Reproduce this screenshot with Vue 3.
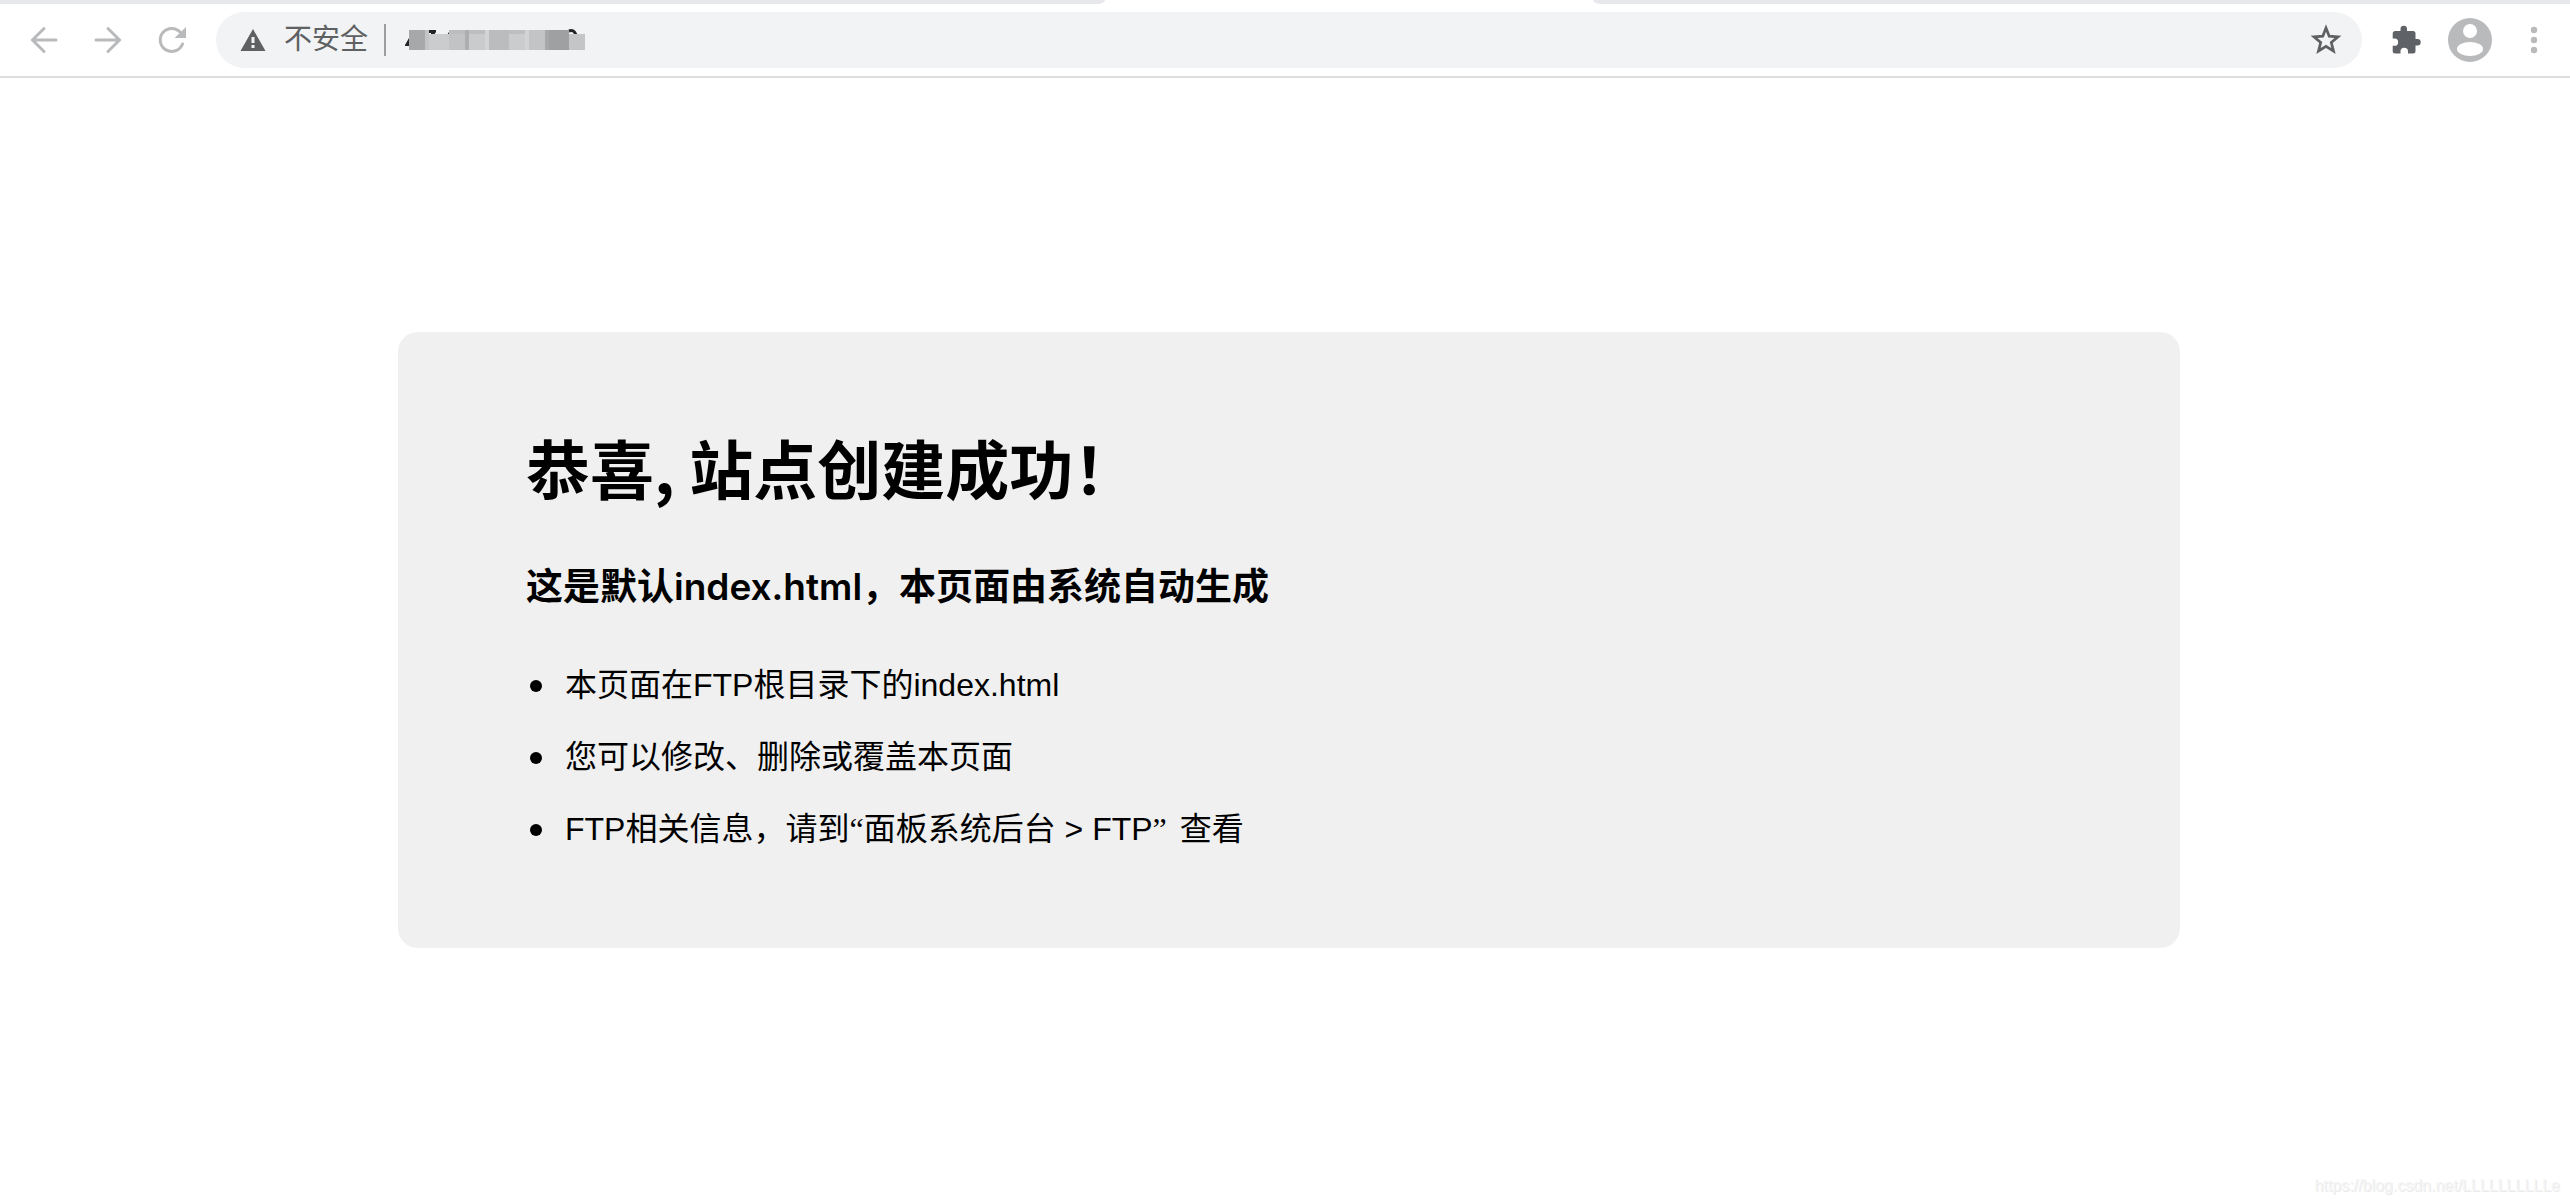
<script setup>
const blocks = [
  [4, 4, 16, 20, '#a7a8a9'], [20, 4, 4, 20, '#c3c4c5'], [24, 8, 20, 16, '#cbcccd'],
  [44, 4, 16, 20, '#bcbdbe'], [44, 8, 16, 16, '#c2c3c4'], [60, 4, 4, 20, '#adaeaf'],
  [64, 4, 16, 20, '#bdbebf'], [64, 8, 16, 16, '#cacbcc'], [80, 4, 4, 20, '#d3d4d5'],
  [84, 4, 20, 20, '#bbbcbd'], [104, 4, 16, 20, '#bebfc0'], [104, 8, 16, 16, '#cbcccd'],
  [120, 4, 4, 20, '#d2d3d4'], [124, 4, 16, 20, '#c3c4c5'], [140, 4, 4, 20, '#a7a8a9'],
  [144, 4, 20, 20, '#9fa0a1'], [164, 8, 16, 16, '#c4c5c6'],
]
const notes = ['本页面在FTP根目录下的index.html', '您可以修改、删除或覆盖本页面']
</script>

<template>
  <div class="page">
    <div class="tabs"><span class="tab left"></span><span class="tab right"></span></div>
    <header class="toolbar">
      <nav class="nav">
        <button aria-label="后退">
          <svg width="32" height="32" viewBox="0 0 32 32" class="line"><path d="M28 16H5M16 4.500L4.500 16L16 27.500" /></svg>
        </button>
        <button aria-label="前进">
          <svg width="32" height="32" viewBox="0 0 32 32" class="line"><path d="M4 16H27M16 4.500L27.500 16L16 27.500" /></svg>
        </button>
        <button aria-label="重新加载">
          <svg width="32" height="32" viewBox="0 0 32 32"><path d="M26.500 20A11.500 11.500 0 1 1 24.500 8.500" fill="none" stroke="#b9babc" stroke-width="3" stroke-linecap="round" /><path d="M30 3V14H18.500Z" fill="#b9babc" /></svg>
        </button>
      </nav>
      <div class="omnibox">
        <svg width="26" height="24" viewBox="0 0 26 24"><path d="M13 1L25.500 23H.5Z" fill="#5f6062" /><path d="M11.500 9h3v6h-3zM11.500 17h3v3h-3z" fill="#f1f3f4" /></svg>
        <span class="insecure">不安全</span>
        <span class="divider"></span>
        <svg class="masked" width="184" height="28" viewBox="0 0 184 28" aria-hidden="true">
          <path d="M4 12L0 19V20H4ZM24 4H31V6L29 9H26V7H24ZM42 9L44 6V9Z" fill="#222426" />
          <path d="M164 5Q169 3 171 9" fill="none" stroke="#222426" stroke-width="3" />
          <rect v-for="(b, i) in blocks" :key="i" :x="b[0]" :y="b[1]" :width="b[2]" :height="b[3]" :fill="b[4]" />
        </svg>
        <input type="text" aria-label="地址栏" />
        <button aria-label="收藏">
          <svg width="32" height="32" viewBox="0 0 32 32"><path d="M16 4L19.200 12.200L28 12.800L21.300 18.500L23.500 27L16 22.300L8.500 27L10.700 18.500L4 12.800L12.800 12.200Z" fill="none" stroke="#5f6062" stroke-width="2.700" /></svg>
        </button>
      </div>
      <div class="actions">
        <button aria-label="扩展程序">
          <svg width="32" height="32" viewBox="0 0 32 32"><path d="M4 7H10.500V5A3.200 3.200 0 0 1 17 5V7H23A2.500 2.500 0 0 1 25.500 9.500V15H27.500A3.200 3.200 0 0 1 27.500 21.400H25.500V27A2.500 2.500 0 0 1 23 29.500H18V27.500A3.700 3.700 0 0 0 10.500 27.500V29.500H5.200A2.500 2.500 0 0 1 2.700 27V21.800H4.500A3.600 3.600 0 0 0 4.500 14.500H2.700V9.500A2.500 2.500 0 0 1 5.200 7Z" fill="#5f6267" /></svg>
        </button>
        <button aria-label="用户">
          <svg width="44" height="44" viewBox="0 0 44 44"><circle cx="22" cy="22" r="22" fill="#b9babc" /><circle cx="22" cy="13" r="7" fill="#fff" /><ellipse cx="22" cy="31" rx="13" ry="7" fill="#fff" /></svg>
        </button>
        <button aria-label="菜单">
          <svg width="8" height="32" viewBox="0 0 8 32"><g fill="#b9babc"><circle cx="4" cy="6" r="3.200" /><circle cx="4" cy="16" r="3.200" /><circle cx="4" cy="26" r="3.200" /></g></svg>
        </button>
      </div>
    </header>
    <main class="content">
      <section class="card">
        <h1>恭喜, 站点创建成功！</h1>
        <h2>这是默认index.html，本页面由系统自动生成</h2>
        <ul>
          <li v-for="n in notes" :key="n">{{ n }}</li>
          <li>FTP相关信息，请到<q>面板系统后台 &gt; FTP</q> 查看</li>
        </ul>
      </section>
    </main>
    <footer>https://blog.csdn.net/LLLLLLLLLLe</footer>
  </div>
</template>

<style>
body { margin: 0; background: #fff; }
</style>

<style scoped>
.page {
  min-height: 100vh;
  display: flex;
  flex-direction: column;
  color: #000;
  font-family: "Liberation Sans", "Noto Sans CJK SC", sans-serif;
}
.tabs { display: flex; justify-content: space-between; height: 4px; }
.tab { background: #e7e8eb; }
.left { width: 43%; border-bottom-right-radius: 8px 4px; }
.right { width: 38%; border-bottom-left-radius: 8px 4px; }
.toolbar {
  display: flex;
  align-items: center;
  height: 72px;
  padding: 0 32px 0 28px;
  border-bottom: 2px solid #dcddde;
}
button { display: flex; padding: 0; border: 0; background: none; }
.nav { display: flex; gap: 32px; margin-right: 28px; }
.line { fill: none; stroke: #b9babc; stroke-width: 3; stroke-linecap: round; }
.omnibox {
  flex: 1;
  display: flex;
  align-items: center;
  height: 56px;
  padding: 0 20px 0 24px;
  box-sizing: border-box;
  border-radius: 28px;
  background: #f1f3f4;
}
.insecure { margin: 0 16px 0 18px; font-size: 28px; line-height: 40px; color: #5f6062; }
.divider { width: 2px; height: 32px; margin-right: 19px; background: #9b9ea1; }
input { flex: 1; min-width: 0; border: 0; outline: 0; background: none; font: inherit; font-size: 28px; }
.actions { display: flex; align-items: center; gap: 26px; margin-left: 28px; }
.actions button:last-child { margin-left: 12px; }
.content { padding: 254px 390px 0 398px; }
.card { padding: 90px 128px 83px; border-radius: 20px; background: #f0f0f0; }
h1, h2, ul { margin: 0; }
h1 { font-size: 64px; line-height: 88px; font-family: "Noto Sans CJK SC", sans-serif; }
h2 { margin-top: 49px; font-family: Inter, "Noto Sans CJK SC", sans-serif; font-size: 37px; font-weight: 600; line-height: 56px; }
ul { margin-top: 34px; padding: 0; font-size: 32px; line-height: 72px; list-style: none; }
li::before {
  content: "";
  display: inline-block;
  width: 12px;
  height: 12px;
  margin: 0 23px 4px 4px;
  border-radius: 6px;
  background: #000;
}
q { margin-right: 4px; quotes: "“" "”"; }
q::before, q::after { font-family: "Liberation Serif", serif; line-height: 1; }
footer {
  margin-top: auto;
  padding: 0 10px 8px;
  text-align: right;
  font-family: "Liberation Sans", sans-serif;
  font-size: 16px;
  line-height: 20px;
  color: #f4f4f4;
  text-shadow: 1px 1px 0 #ebebeb;
}
</style>
